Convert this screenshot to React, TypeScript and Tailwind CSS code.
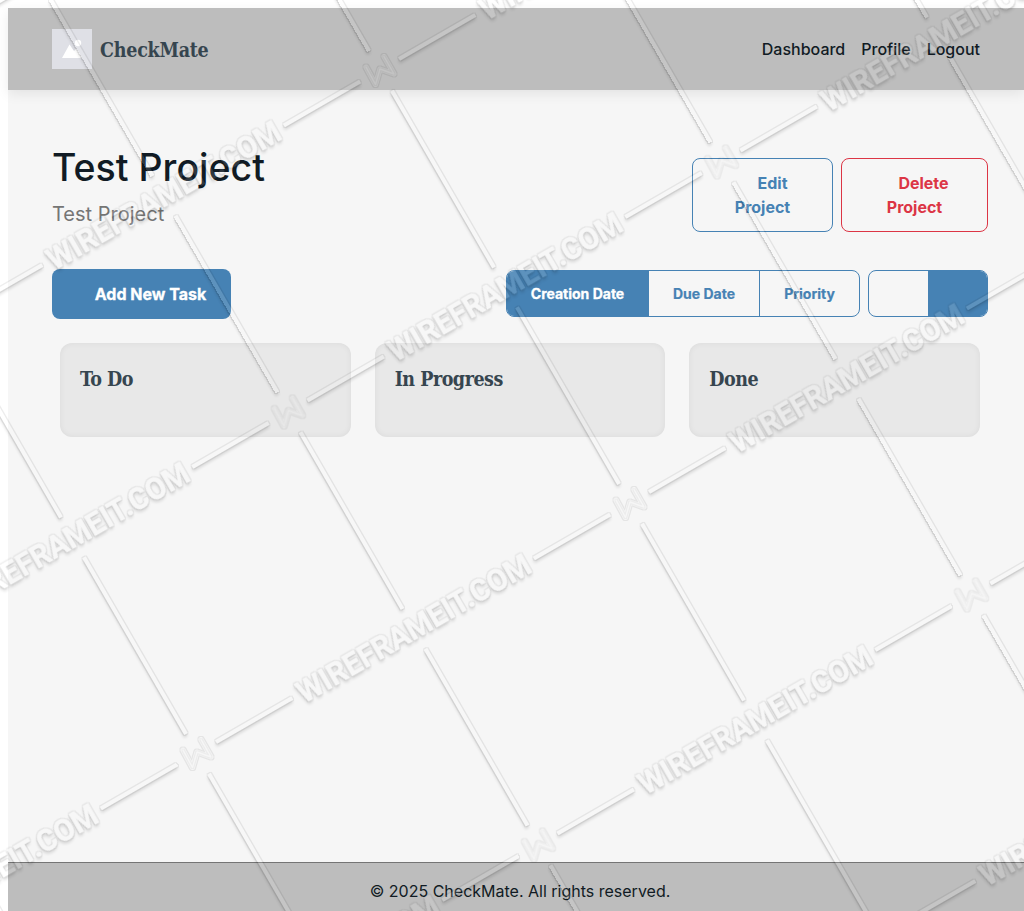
import React from "react";

const columns = ["To Do", "In Progress", "Done"];

const tiles: { x: number; y: number }[] = [];
for (let r = -2; r <= 3; r++) {
  for (let c = -2; c <= 3; c++) {
    tiles.push({ x: c * 500, y: r * 500 }, { x: c * 500 + 250, y: r * 500 + 250 });
  }
}

const logoPath = "M-14 -3 L-4.5 14.5 L0 -1 L14 4 L4 -13.5";
const grid = "translate(380 70) rotate(-30)";

function Watermark() {
  return (
    <svg className="pointer-events-none absolute inset-0 h-full w-full" viewBox="0 0 1024 911" aria-hidden="true">
      <defs>
        <g id="wm-tile">
          <rect x="22" y="-2" width="88" height="4" />
          <rect x="389" y="-2" width="88" height="4" />
          <rect x="-2" y="24" width="4" height="204" />
          <rect x="-2" y="274" width="4" height="204" />
          <text x="250" y="11" textAnchor="middle" textLength="265" lengthAdjust="spacingAndGlyphs" className="font-[Roboto] text-[31px] font-bold" stroke="#fff" strokeWidth="0.4">
            WIREFRAMEIT.COM
          </text>
        </g>
        <path id="wm-logo" d={logoPath} transform="rotate(30)" fill="none" stroke="#fff" strokeLinecap="round" strokeLinejoin="round" />
        <filter id="wm-emboss" filterUnits="userSpaceOnUse" x="-20" y="-20" width="1064" height="951" colorInterpolationFilters="sRGB">
          <feMorphology in="SourceAlpha" operator="dilate" radius="1" result="grown" />
          <feComposite in="grown" in2="SourceAlpha" operator="out" result="ring" />
          <feComponentTransfer in="ring" result="edge">
            <feFuncA type="linear" slope="0.07" />
          </feComponentTransfer>
          <feGaussianBlur in="SourceAlpha" stdDeviation="1.5" />
          <feOffset dx="0" dy="3" />
          <feComposite in2="SourceAlpha" operator="out" />
          <feComponentTransfer result="shade">
            <feFuncA type="linear" slope="0.12" />
          </feComponentTransfer>
          <feComponentTransfer in="SourceGraphic" result="face">
            <feFuncA type="linear" slope="0.13" />
          </feComponentTransfer>
          <feMerge>
            <feMergeNode in="shade" />
            <feMergeNode in="edge" />
            <feMergeNode in="face" />
          </feMerge>
        </filter>
        <filter id="wm-outline" filterUnits="userSpaceOnUse" x="-20" y="-20" width="1064" height="951" colorInterpolationFilters="sRGB">
          <feMorphology in="SourceAlpha" operator="dilate" radius="1" result="grown" />
          <feComposite in="grown" in2="SourceAlpha" operator="out" />
          <feComponentTransfer result="edge">
            <feFuncA type="linear" slope="0.07" />
          </feComponentTransfer>
          <feComponentTransfer in="SourceGraphic" result="face">
            <feFuncA type="linear" slope="0.07" />
          </feComponentTransfer>
          <feMerge>
            <feMergeNode in="edge" />
            <feMergeNode in="face" />
          </feMerge>
        </filter>
      </defs>
      <g filter="url(#wm-emboss)">
        <g transform={grid} fill="#fff">
          {tiles.map((t) => (
            <use key={`${t.x},${t.y}`} href="#wm-tile" x={t.x} y={t.y} />
          ))}
        </g>
      </g>
      <g filter="url(#wm-outline)">
        <g transform={grid} strokeWidth="5">
          {tiles.map((t) => (
            <use key={`${t.x},${t.y}`} href="#wm-logo" x={t.x} y={t.y} />
          ))}
        </g>
      </g>
      <g filter="url(#wm-outline)" opacity="0.6">
        <g transform={grid} strokeWidth="1.4">
          {tiles.map((t) => (
            <use key={`${t.x},${t.y}`} href="#wm-logo" x={t.x} y={t.y} />
          ))}
        </g>
      </g>
    </svg>
  );
}

function Logo() {
  return (
    <svg className="h-10 w-10" viewBox="0 0 40 40">
      <rect width="40" height="40" fill="#dfe0e6" />
      <path d="M10 29 L17.5 15.5 L22 22 L24.5 19.5 L30 29 Z" fill="#fff" />
      <circle cx="26" cy="14" r="3.2" fill="#fff" />
    </svg>
  );
}

export default function App() {
  return (
    <div className="relative h-[911px] w-[1024px] overflow-hidden bg-white pt-2 pl-2 font-[Inter,sans-serif] text-base text-[#111b24]">
      <div className="flex h-[903px] flex-col bg-[#f6f6f6]">
        <header className="flex h-[82px] shrink-0 items-center justify-between bg-[#bdbdbd] pr-11 pl-11 shadow-[0_4px_12px_rgba(0,0,0,0.08)]">
          <div className="flex items-center gap-2">
            <Logo />
            <span className="pt-[3px] font-['Roboto_Slab','DejaVu_Serif_Condensed','DejaVu_Serif',serif] text-[19.5px] font-bold tracking-[-0.25px] text-[#36454f]">CheckMate</span>
          </div>
          <nav className="flex gap-4 font-medium">
            <a>Dashboard</a>
            <a>Profile</a>
            <a>Logout</a>
          </nav>
        </header>

        <main className="flex flex-1 flex-col pr-9 pl-11">
          <div className="flex h-[142px] items-end justify-between">
            <div className="mb-[3px]">
              <h1 className="text-[37.5px] leading-[48px] font-medium">Test Project</h1>
              <p className="mt-[7px] text-xl leading-[30px] text-[#757575]">Test Project</p>
            </div>
            <div className="flex gap-2 text-center leading-6 font-bold">
              <button className="h-[74px] w-[141px] rounded-lg border border-[#4682b4] text-[#4682b4]">
                <span className="block pl-5">Edit</span>
                <span className="block">Project</span>
              </button>
              <button className="h-[74px] w-[147px] rounded-lg border border-[#dc3545] text-[#dc3545]">
                <span className="block pl-[18px]">Delete</span>
                <span className="block">Project</span>
              </button>
            </div>
          </div>

          <div className="mt-[37px] flex h-[50px] items-center justify-between">
            <button className="h-[50px] w-[179px] rounded-lg bg-[#4682b4] pl-[18px] font-bold text-white [-webkit-text-stroke:0.3px_#fff]">Add New Task</button>
            <div className="mb-px flex gap-2 text-sm font-bold text-[#4682b4]">
              <div className="flex h-[47px] w-[354px] overflow-hidden rounded-lg border border-[#4682b4]">
                <button className="w-[142px] bg-[#4682b4] pr-px text-white [-webkit-text-stroke:0.3px_#fff]">Creation Date</button>
                <button className="w-[111px] border-r border-[#4682b4] [-webkit-text-stroke:0.2px_#4682b4]">Due Date</button>
                <button className="flex-1 [-webkit-text-stroke:0.2px_#4682b4]">Priority</button>
              </div>
              <div className="flex h-[47px] w-[120px] overflow-hidden rounded-lg border border-[#4682b4]">
                <button className="w-[59px]" />
                <button className="flex-1 bg-[#4682b4]" />
              </div>
            </div>
          </div>

          <div className="mt-6 mr-2 ml-2 grid grid-cols-3 gap-6">
            {columns.map((name) => (
              <section key={name} className="h-[94px] rounded-xl bg-[#e8e8e8] px-5 pt-[22px] shadow-[inset_0_0_6px_rgba(0,0,0,0.06)]">
                <h2 className="font-['Roboto_Slab','DejaVu_Serif_Condensed','DejaVu_Serif',serif] text-[19.5px] leading-[30px] font-bold tracking-[-0.5px] text-[#36454f]">{name}</h2>
              </section>
            ))}
          </div>
        </main>

        <footer className="flex h-[49px] shrink-0 items-center justify-center border-t border-[#757575] bg-[#bdbdbd] pt-2">
          <p className="pl-2">© 2025 CheckMate. All rights reserved.</p>
        </footer>
      </div>
      <Watermark />
    </div>
  );
}
